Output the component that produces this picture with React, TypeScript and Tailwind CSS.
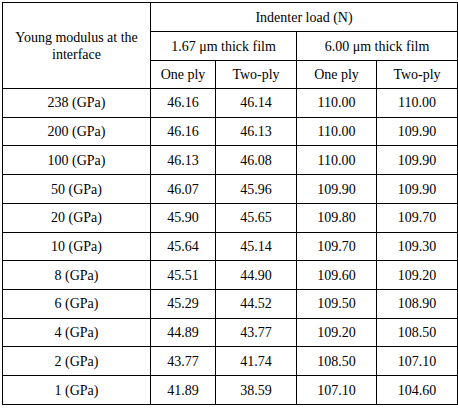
import React from "react";

const rows: [string, string, string, string, string][] = [
  ["238 (GPa)", "46.16", "46.14", "110.00", "110.00"],
  ["200 (GPa)", "46.16", "46.13", "110.00", "109.90"],
  ["100 (GPa)", "46.13", "46.08", "110.00", "109.90"],
  ["50 (GPa)", "46.07", "45.96", "109.90", "109.90"],
  ["20 (GPa)", "45.90", "45.65", "109.80", "109.70"],
  ["10 (GPa)", "45.64", "45.14", "109.70", "109.30"],
  ["8 (GPa)", "45.51", "44.90", "109.60", "109.20"],
  ["6 (GPa)", "45.29", "44.52", "109.50", "108.90"],
  ["4 (GPa)", "44.89", "43.77", "109.20", "108.50"],
  ["2 (GPa)", "43.77", "41.74", "108.50", "107.10"],
  ["1 (GPa)", "41.89", "38.59", "107.10", "104.60"],
];

const cell =
  "border border-black text-center align-middle p-0 font-['Liberation_Serif',serif] text-[14px] leading-[17px] text-black";

export default function App() {
  return (
    <div className="w-[458px] h-[408px] bg-white pt-[2px] pl-[2px] text-black font-['Liberation_Serif',serif]">
      <table className="border-collapse table-fixed w-[455px] font-['Liberation_Serif',serif]">
        <colgroup>
          <col className="w-[148px]" />
          <col className="w-[65px]" />
          <col className="w-[81px]" />
          <col className="w-[80px]" />
          <col className="w-[81px]" />
        </colgroup>
        <tbody>
          <tr className="h-[29px]">
            <td rowSpan={3} className={`${cell} px-2`}>
              Young modulus at the interface
            </td>
            <td colSpan={4} className={cell}>
              Indenter load (N)
            </td>
          </tr>
          <tr className="h-[29px]">
            <td colSpan={2} className={cell}>
              1.67 μm thick film
            </td>
            <td colSpan={2} className={cell}>
              6.00 μm thick film
            </td>
          </tr>
          <tr className="h-[28px]">
            <td className={cell}>One ply</td>
            <td className={cell}>Two-ply</td>
            <td className={cell}>One ply</td>
            <td className={cell}>Two-ply</td>
          </tr>
          {rows.map((r) => (
            <tr key={r[0]} className="h-[28.73px]">
              {r.map((v, i) => (
                <td key={i} className={cell}>
                  {v}
                </td>
              ))}
            </tr>
          ))}
        </tbody>
      </table>
    </div>
  );
}
